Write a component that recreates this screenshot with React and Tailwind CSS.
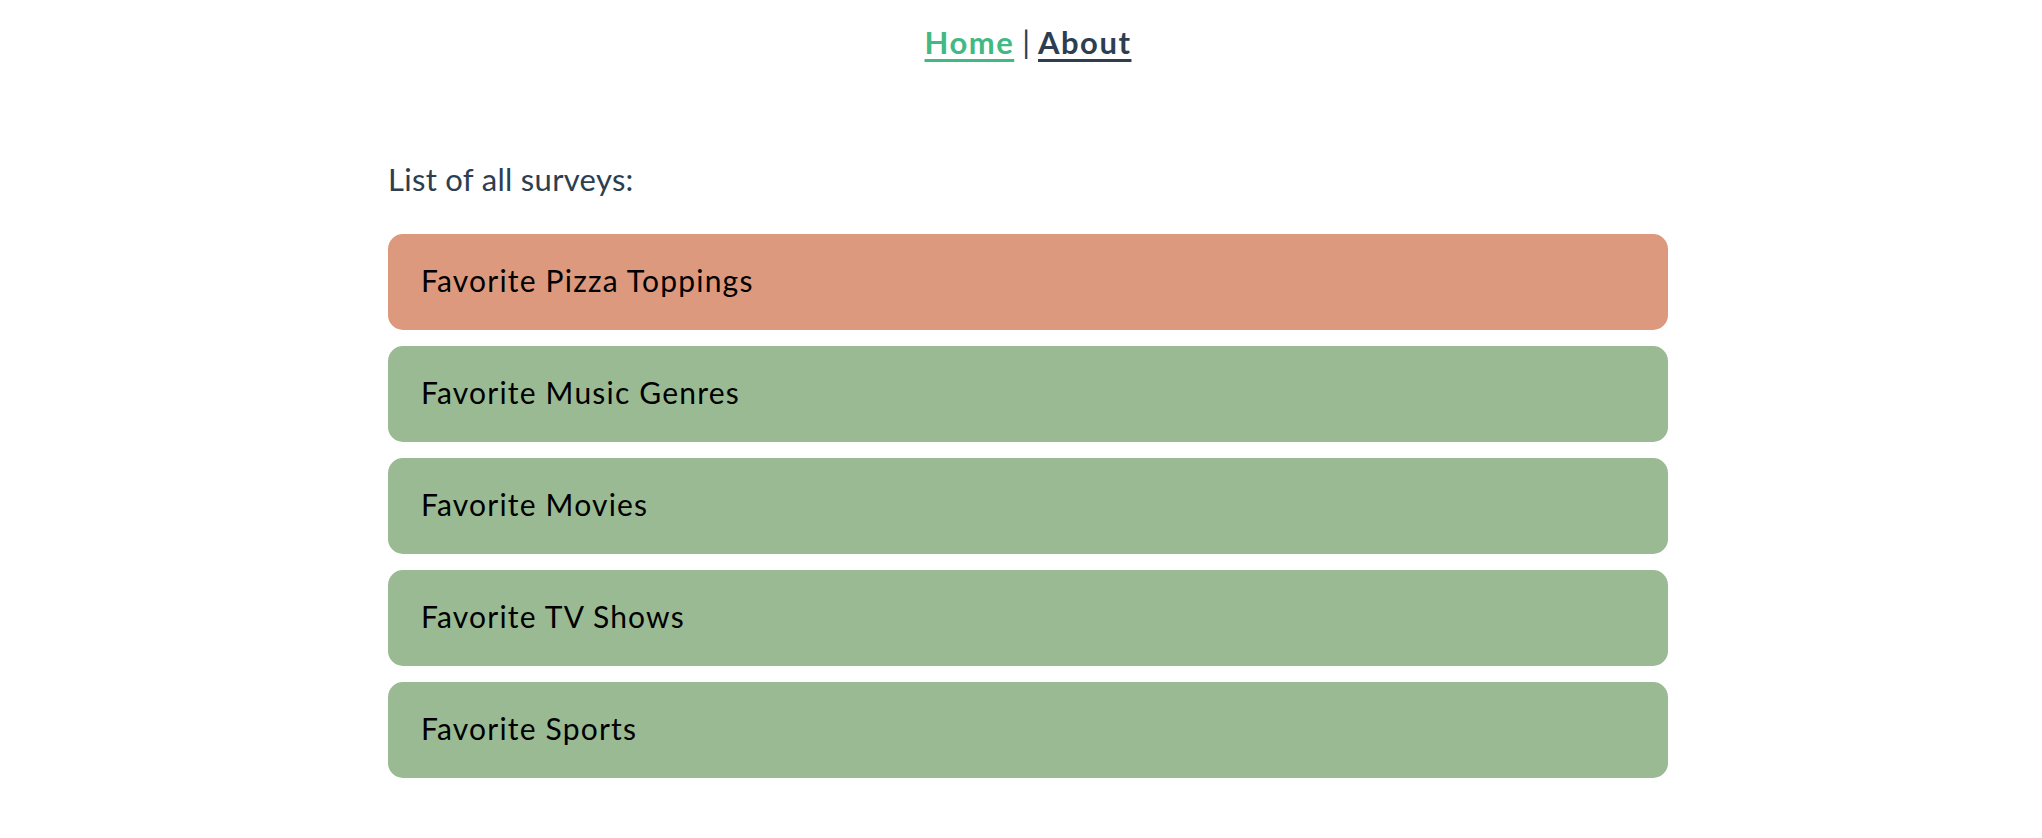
const surveys = [
  { id: 1, name: 'Favorite Pizza Toppings', active: true },
  { id: 2, name: 'Favorite Music Genres' },
  { id: 3, name: 'Favorite Movies' },
  { id: 4, name: 'Favorite TV Shows' },
  { id: 5, name: 'Favorite Sports' },
];

export default function App() {
  return (
    <div className="min-h-screen bg-white pl-[14px] font-['Lato','Liberation_Sans',sans-serif] text-[#2c3e50] antialiased">
      <nav className="flex justify-center pt-[19px] text-[31px] font-bold leading-[46px]">
        <a href="#" className="tracking-[1.5px] text-[#42b983] underline underline-offset-[5px]">Home</a>
        <span className="px-[8px] font-normal">|</span>
        <a href="#" className="tracking-[1.5px] text-[#2c3e50] underline underline-offset-[5px]">About</a>
      </nav>

      <main className="mx-auto w-[1280px] pt-[94px]">
        <h2 className="text-[31px] leading-[40px] tracking-[0.3px]">List of all surveys:</h2>
        <ul className="mt-[35px] flex flex-col gap-4">
          {surveys.map(s => (
            <li
              key={s.id}
              className={`flex h-[96px] items-center rounded-[15px] px-[33px] pb-[4px] text-[30px] tracking-[1.2px] text-black ${s.active ? 'bg-[#dd997d]' : 'bg-[#9aba94]'}`}
            >
              {s.name}
            </li>
          ))}
        </ul>
      </main>
    </div>
  );
}
